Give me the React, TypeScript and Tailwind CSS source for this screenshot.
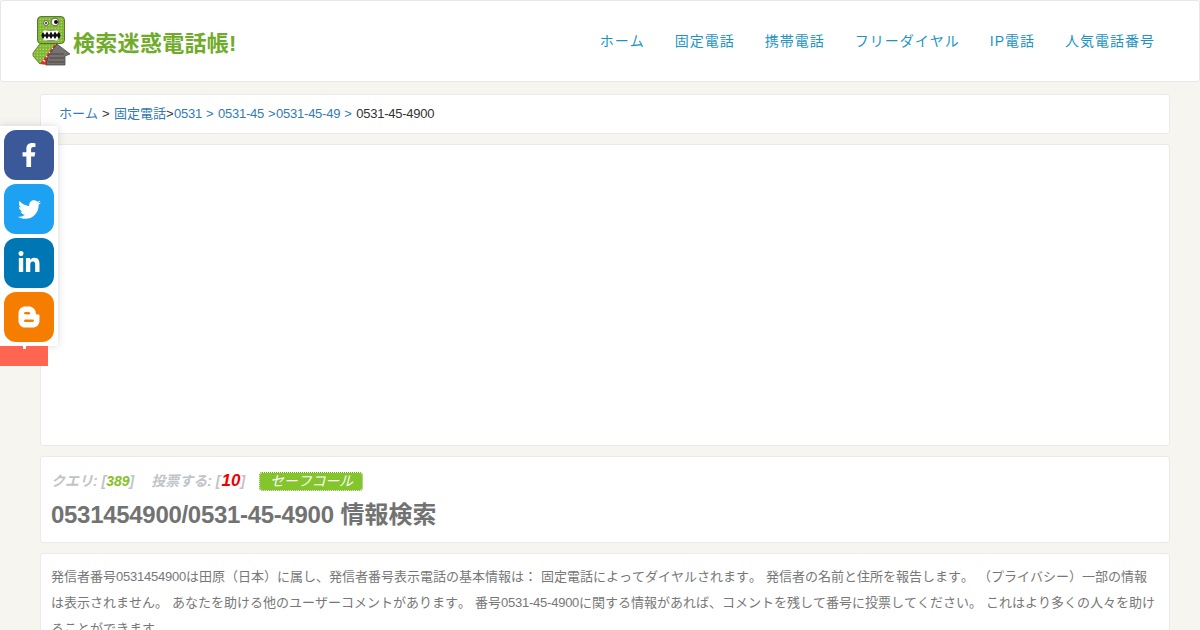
import React from "react";
import { FaFacebookF, FaTwitter, FaLinkedinIn, FaBloggerB } from "react-icons/fa";

const FONT = { fontFamily: '"Liberation Sans", "Noto Sans CJK JP", sans-serif' };

function Logo() {
  return (
    <svg width="44" height="54" viewBox="30 14 44 54" className="shrink-0">
      <defs>
        <pattern id="dots" width="3" height="3" patternUnits="userSpaceOnUse">
          <rect width="3" height="3" fill="#7fb72e" />
          <circle cx="1.2" cy="1.200" r="0.6" fill="#d5e9a8" />
        </pattern>
      </defs>
      {/* scarf */}
      <path d="M42 41 L33 53 L33 56 L40 64 L46 60 L56 46 L58 41Z" fill="url(#dots)" stroke="#3f5a1a" strokeWidth="0.7" />
      <path d="M40 64 L54 45 L59 47 L47 65Z" fill="#d8322a" />
      <path d="M43 60l2 1.500M46 56l2 1.500M49 52l2 1.500M52 48l2 1.500" stroke="#fff" strokeWidth="1.300" />
      {/* body */}
      <path d="M57 44 L70 54 L65 56 L65 65 L46 65 L48 56Z" fill="#777270" stroke="#3d3b3a" strokeWidth="0.7" />
      <path d="M50 54h14M49 58h15M48 62h16" stroke="#4a4745" strokeWidth="1" />
      {/* head */}
      <rect x="37.500" y="16.500" width="27" height="27" rx="3.500" fill="url(#dots)" stroke="#3f5a1a" strokeWidth="0.8" />
      <ellipse cx="51" cy="35.500" rx="9.500" ry="5.500" fill="#111" />
      <path d="M43 32l2 3 2-3.500 2 3.500 2-3.500 2 3.500 2-3.500 2 3 1.500-2.500 -1-1.500H44zM43 39l2-3 2 3 2-3 2 3 2-3 2 3 2-3 1.500 2.500 -1.500 2H45z" fill="#fff" />
      <circle cx="46" cy="23" r="2.400" fill="#fff" stroke="#333" strokeWidth="0.7" />
      <circle cx="46" cy="23" r="1" fill="#222" />
      <circle cx="55" cy="22" r="3.800" fill="#fff" stroke="#333" strokeWidth="0.7" />
      <circle cx="56" cy="22" r="2" fill="#111" />
    </svg>
  );
}

const nav = ["ホーム", "固定電話", "携帯電話", "フリーダイヤル", "IP電話", "人気電話番号"];

const social = [
  { bg: "bg-[#3b5998]", icon: <FaFacebookF size={24} /> },
  { bg: "bg-[#1da1f2]", icon: <FaTwitter size={23} /> },
  { bg: "bg-[#0077b5]", icon: <FaLinkedinIn size={24} /> },
  { bg: "bg-[#f57d00]", icon: <FaBloggerB size={24} /> },
];

function Num({ children }: { children: React.ReactNode }) {
  return <span className="tracking-[-0.24px]">{children}</span>;
}

function Sep({ children }: { children: React.ReactNode }) {
  return <span className="whitespace-pre tracking-[0.4px]">{children}</span>;
}

export default function App() {
  return (
    <div style={FONT} className="relative h-[630px] overflow-hidden bg-[#f6f5f0] [font-kerning:none]">
      <header className="flex h-[82px] items-center justify-between rounded-[3px] border border-[#e7e7e7] bg-white pl-[29px] pr-[44px]">
        <div className="flex items-center">
          <Logo />
          <span className="-ml-[1px] pt-[6px] text-[22px] font-bold leading-none tracking-[0.3px] text-[#70ab2a]">検索迷惑電話帳!</span>
        </div>
        <nav className="flex gap-[30px] text-[14px] tracking-[1px] text-[#1c94c4]">
          {nav.map((n) => (
            <span key={n}>{n}</span>
          ))}
        </nav>
      </header>

      <main className="ml-[40px] mr-[30px] mt-[12px] flex flex-col gap-[10px]">
        <div className="flex h-[40px] items-center rounded-[3px] border border-[#eaeaea] bg-white px-[18px] text-[13px] text-[#333]">
          <span className="text-[#337ab7]">ホーム</span>
          <Sep> &gt; </Sep>
          <span className="text-[#337ab7]">固定電話</span>
          <Sep>&gt;</Sep>
          <span className="flex text-[#337ab7]">
            <Num>0531</Num>
            <Sep> &gt; </Sep>
            <Num>0531-45</Num>
            <Sep> &gt;</Sep>
            <Num>0531-45-49</Num>
            <Sep> &gt; </Sep>
          </span>
          <Num>0531-45-4900</Num>
        </div>

        <div className="h-[302px] rounded-[3px] border border-[#eaeaea] bg-white" />

        <div className="h-[87px] rounded-[3px] border border-[#eaeaea] bg-white px-[10px] pt-[14px]">
          <div className="flex h-[20px] items-center text-[14px] italic text-[#c0c4c8]">
            <span className="font-bold">クエリ: [</span>
            <span className="font-bold text-[#84c225]">389</span>
            <span className="font-bold">]</span>
            <span className="ml-[17px] font-bold">投票する: [</span>
            <span className="ml-[1px] text-[17px] font-bold text-[#ee0000]">10</span>
            <span className="font-bold">]</span>
            <span className="ml-[14px] flex h-[19px] w-[104px] items-center whitespace-nowrap rounded-[3px] border border-dotted border-[#6ea51f] bg-[#84c52c] bg-clip-padding pl-[10px] text-[14px] tracking-[-0.2px] text-white">
              セーフコール
            </span>
          </div>
          <h1 className="mt-[6px] text-[24px] font-bold leading-[36px] text-[#727272]">
            <span className="tracking-[-0.3px]">0531454900/0531-45-4900</span> 情報検索
          </h1>
        </div>

        <div className="rounded-[3px] border border-[#eaeaea] bg-white px-[10px] pt-[10px] text-[13px] leading-[26px] text-[#777] [word-spacing:0.4px]">
          <div className="whitespace-nowrap">発信者番号<Num>0531454900</Num>は田原（日本）に属し、発信者番号表示電話の基本情報は： 固定電話によってダイヤルされます。 発信者の名前と住所を報告します。 （プライバシー）一部の情報</div>
          <div className="whitespace-nowrap">は表示されません。 あなたを助ける他のユーザーコメントがあります。 番号<Num>0531-45-4900</Num>に関する情報があれば、コメントを残して番号に投票してください。 これはより多くの人々を助け</div>
          <div className="whitespace-nowrap">ることができます。</div>
        </div>
      </main>

      <aside className="absolute left-0 top-[126px] flex w-[58px] flex-col gap-[4px] rounded-r-[3px] bg-white p-[4px] shadow-[0_0_8px_rgba(0,0,0,0.15)]">
        {social.map((s, i) => (
          <div key={i} className={`flex h-[50px] w-[50px] items-center justify-center rounded-[12px] text-white ${s.bg}`}>
            {s.icon}
          </div>
        ))}
      </aside>
      <div className="absolute left-0 top-[346px] flex h-[20px] w-[48px] justify-center bg-[#ff6550]">
        <span className="h-[3px] w-[3px] bg-white" />
      </div>
    </div>
  );
}
